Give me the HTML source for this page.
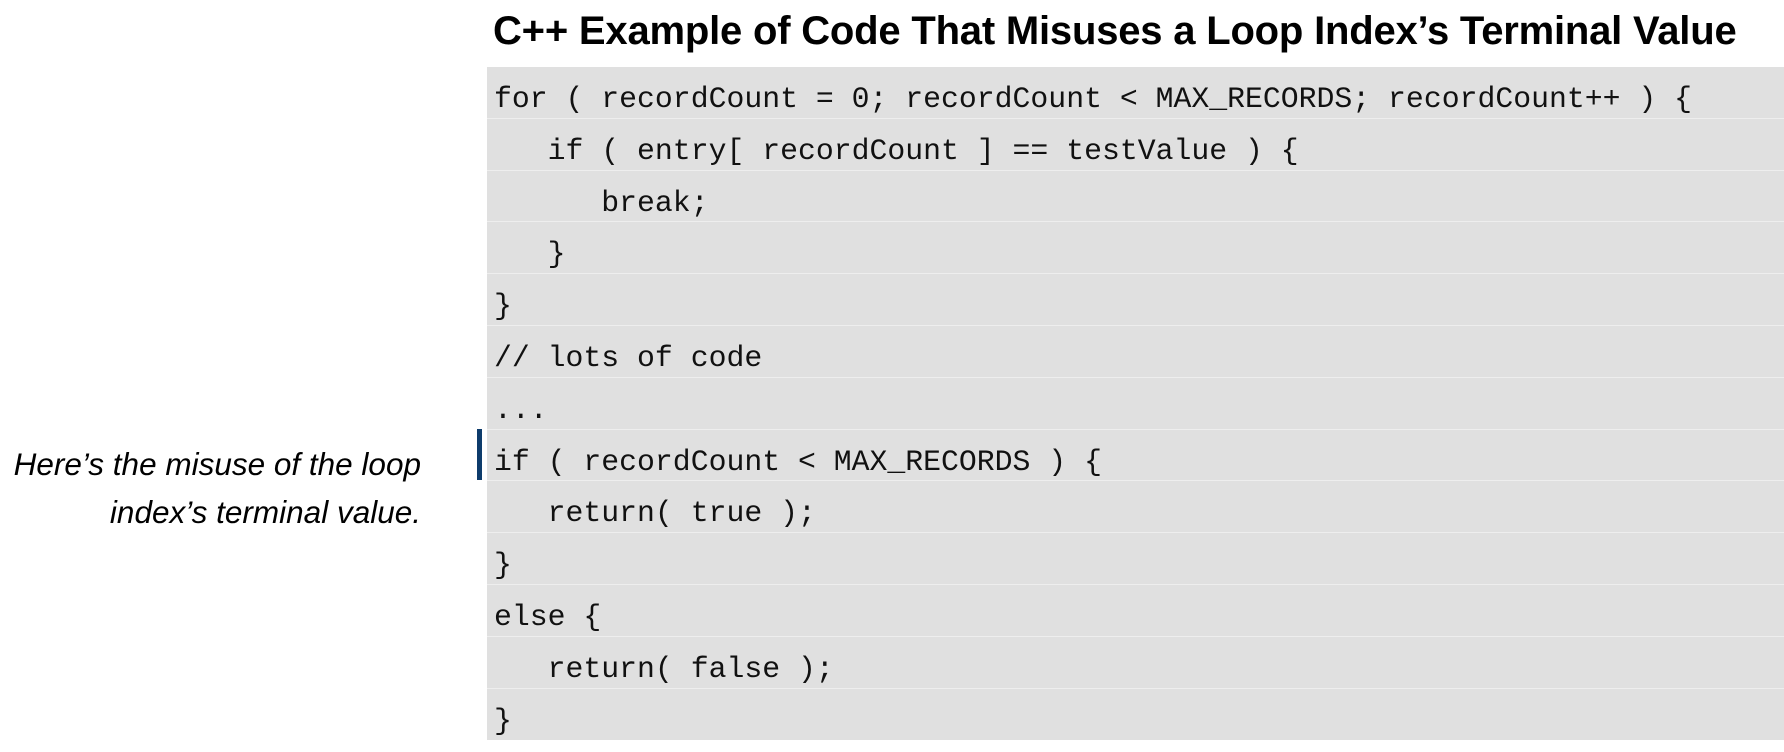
<!DOCTYPE html>
<html><head><style>
body{margin:0;width:1784px;height:752px;background:#fff;position:relative;overflow:hidden}
.title{position:absolute;left:493px;top:9px;font:bold 40px "Liberation Sans",sans-serif;color:#000;white-space:nowrap;letter-spacing:-0.2px}
.box{position:absolute;left:487px;top:67px;width:1297px;height:673px;background:#e0e0e0}
.row{height:50.8px;border-bottom:1px solid #eeeeee;box-sizing:content-box;font:29.8px/51px "Liberation Mono",monospace;color:#111;white-space:pre;padding-left:7px}
.row span{position:relative;top:7px}
.bar{position:absolute;left:477px;top:429px;width:5px;height:51px;background:#0d3b6b}
.note{position:absolute;right:1363px;top:440px;font:italic 31.5px/48px "Liberation Sans",sans-serif;text-align:right;color:#000;white-space:nowrap}
</style></head><body>
<div class="title">C++ Example of Code That Misuses a Loop Index’s Terminal Value</div>
<div class="box">
<div class="row"><span>for ( recordCount = 0; recordCount &lt; MAX_RECORDS; recordCount++ ) {</span></div>
<div class="row"><span>   if ( entry[ recordCount ] == testValue ) {</span></div>
<div class="row"><span>      break;</span></div>
<div class="row"><span>   }</span></div>
<div class="row"><span>}</span></div>
<div class="row"><span>// lots of code</span></div>
<div class="row"><span>...</span></div>
<div class="row"><span>if ( recordCount &lt; MAX_RECORDS ) {</span></div>
<div class="row"><span>   return( true );</span></div>
<div class="row"><span>}</span></div>
<div class="row"><span>else {</span></div>
<div class="row"><span>   return( false );</span></div>
<div class="row" style="border:none"><span>}</span></div>
</div>
<div class="bar"></div>
<div class="note">Here’s the misuse of the loop<br>index’s terminal value.</div>
</body></html>
